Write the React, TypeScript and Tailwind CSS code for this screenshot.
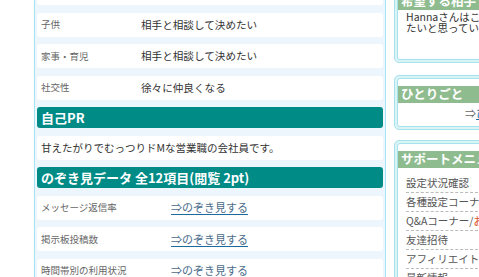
const font = { fontFamily: '"Noto Sans CJK JP", "Noto Sans", sans-serif' };

type Row = { label: string; value: string };

const profileRows: Row[] = [
  { label: "結婚後の住居", value: "相手と相談して決めたい" },
  { label: "子供", value: "相手と相談して決めたい" },
  { label: "家事・育児", value: "相手と相談して決めたい" },
  { label: "社交性", value: "徐々に仲良くなる" },
];

const peekRows = ["メッセージ返信率", "掲示板投稿数", "時間帯別の利用状況"];

const menu = ["設定状況確認", "各種設定コーナー", "Q&Aコーナー/", "友達招待", "アフィリエイト", "最新情報"];

function SectionHead({ children }: { children: React.ReactNode }) {
  return (
    <div className="flex h-[21px] items-center rounded-[3px] bg-[#008b87] pl-[4px] text-[13px] font-bold leading-none text-white">
      {children}
    </div>
  );
}

function SideBox({ title, children, className }: { title: string; children: React.ReactNode; className?: string }) {
  return (
    <div className={`rounded-[5px] border border-[#a6e2ec] bg-[#d9f3f7] p-[2px] ${className ?? ""}`}>
      <div className="rounded-[3px] border border-[#a6e2ec] bg-white pt-[7px]">
        <div className="flex h-[17px] items-center bg-[#8fbc8f] pl-[3px] text-[12.5px] font-bold leading-none text-white">
          {title}
        </div>
        {children}
      </div>
    </div>
  );
}

export default function App() {
  return (
    <div className="flex h-[277px] w-[479px] overflow-hidden bg-white" style={font}>
      <div className="w-[34px] shrink-0" />

      {/* main column */}
      <div className="h-full w-[352px] shrink-0 border-x border-[#a3e2f0] bg-[#eef6fd] px-[2px]">
        <div className="-mt-[19px] flex flex-col gap-[7.5px]">
          {profileRows.map((r) => (
            <div key={r.label} className="flex h-[24px] items-center rounded-[3px] bg-white pl-[4px]">
              <span className="w-[100px] shrink-0 text-[9.5px] text-[#666]">{r.label}</span>
              <span className="text-[10.6px] text-[#333]">{r.value}</span>
            </div>
          ))}

          <SectionHead>自己PR</SectionHead>
          <div className="flex h-[24px] items-center rounded-[3px] bg-white pl-[4px] text-[10.5px] text-[#333]">
            甘えたがりでむっつりドMな営業職の会社員です。
          </div>

          <SectionHead>のぞき見データ 全12項目(閲覧 2pt)</SectionHead>
          {peekRows.map((label) => (
            <div key={label} className="flex h-[24px] items-center rounded-[3px] bg-white pl-[4px]">
              <span className="w-[130px] shrink-0 text-[9.5px] text-[#666]">{label}</span>
              <a className="text-[11px] text-[#4a6b8a] underline decoration-[#1c6a9c] underline-offset-[2px]">
                ⇒のぞき見する
              </a>
            </div>
          ))}
        </div>
      </div>

      {/* side column */}
      <div className="ml-[8px] w-[160px] shrink-0">
        <div className="-mt-[18px]">
          <SideBox title="希望する相手" className="mb-[12px]">
            <p className="whitespace-nowrap px-[8px] pb-[26px] pt-[1px] text-[10.5px] leading-[11px] text-[#333]">
              Hannaさんはこんな人と出会い
              <br />
              たいと思っています。
            </p>
          </SideBox>

          <SideBox title="ひとりごと" className="mb-[10px]">
            <div className="mt-[3px] h-[14px] whitespace-nowrap pl-[67px] text-[11px] leading-[14px] text-[#666]">
              ⇒<a className="text-[#1c6a9c] underline">ひとりごと一覧</a>
            </div>
            <div className="h-[6px]" />
          </SideBox>

          <SideBox title="サポートメニュー">
            <ul className="mx-[8px] mt-[6px]">
              {menu.map((m) => (
                <li
                  key={m}
                  className="h-[19px] whitespace-nowrap border-b border-dashed border-[#bbb] pt-[1px] text-[10.5px] leading-[15px] text-[#555]"
                >
                  {m}
                  {m === "Q&Aコーナー/" ? <span className="text-[#e0502a]">お問い合わせ</span> : null}
                </li>
              ))}
            </ul>
          </SideBox>
        </div>
      </div>
    </div>
  );
}
